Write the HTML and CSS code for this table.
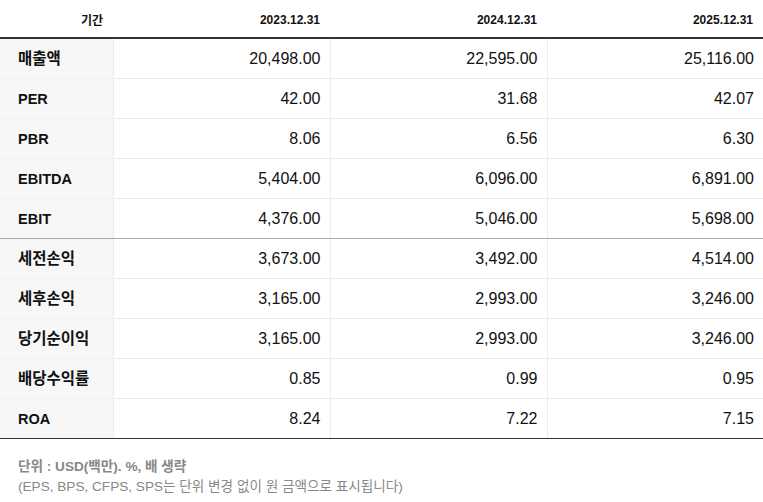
FILE: index.html
```html
<!DOCTYPE html>
<html lang="ko">
<head>
<meta charset="utf-8">
<link rel="stylesheet" href="styles.css">
</head>
<body>
<table class="fin">
  <colgroup>
    <col class="c-label">
    <col class="c-val">
    <col class="c-val">
    <col>
  </colgroup>
  <thead>
    <tr>
      <th>기간</th>
      <th>2023.12.31</th>
      <th>2024.12.31</th>
      <th>2025.12.31</th>
    </tr>
  </thead>
  <tbody>
    <tr><th class="ko">매출액</th><td>20,498.00</td><td>22,595.00</td><td>25,116.00</td></tr>
    <tr><th>PER</th><td>42.00</td><td>31.68</td><td>42.07</td></tr>
    <tr><th>PBR</th><td>8.06</td><td>6.56</td><td>6.30</td></tr>
    <tr><th>EBITDA</th><td>5,404.00</td><td>6,096.00</td><td>6,891.00</td></tr>
    <tr class="sep"><th>EBIT</th><td>4,376.00</td><td>5,046.00</td><td>5,698.00</td></tr>
    <tr><th class="ko">세전손익</th><td>3,673.00</td><td>3,492.00</td><td>4,514.00</td></tr>
    <tr><th class="ko">세후손익</th><td>3,165.00</td><td>2,993.00</td><td>3,246.00</td></tr>
    <tr><th class="ko">당기순이익</th><td>3,165.00</td><td>2,993.00</td><td>3,246.00</td></tr>
    <tr><th class="ko">배당수익률</th><td>0.85</td><td>0.99</td><td>0.95</td></tr>
    <tr class="last"><th>ROA</th><td>8.24</td><td>7.22</td><td>7.15</td></tr>
  </tbody>
</table>
<div class="note">
  <p class="note-main">단위 : USD(백만). %, 배 생략</p>
  <p class="note-sub">(EPS, BPS, CFPS, SPS는 단위 변경 없이 원 금액으로 표시됩니다)</p>
</div>
</body>
</html>
```
FILE: styles.css
```css
html, body {
  margin: 0;
  padding: 0;
  background: #fff;
}
body {
  font-family: "Liberation Sans", Arial, "Noto Sans CJK KR", sans-serif;
  color: #111;
}
.fin {
  width: 763px;
  border-collapse: collapse;
  table-layout: fixed;
}
.c-label { width: 113px; }
.c-val { width: 217px; }

.fin thead th {
  height: 38px;
  padding: 2px 10px 0 0;
  box-sizing: border-box;
  text-align: right;
  font-size: 12px;
  font-weight: bold;
  color: #111;
  border-bottom: 2px solid #333;
}
.fin tbody th,
.fin tbody td {
  height: 39px;
  padding: 0;
  line-height: 18px;
  border-bottom: 1px solid #ebebeb;
}
.fin tbody th {
  background: #f7f7f7;
  text-align: left;
  padding-left: 18px;
  font-size: 14.5px;
  font-weight: bold;
  border-bottom-color: #f1f1f1;
  border-right: 1px solid #ebebeb;
}
.fin tbody th.ko {
  font-size: 15.5px;
}
.fin tbody td {
  text-align: right;
  padding-right: 9px;
  font-size: 16px;
  border-left: 1px solid #ebebeb;
}
.fin tbody tr.sep th,
.fin tbody tr.sep td {
  border-bottom: 1px solid #aaa;
}
.fin tbody tr.last th,
.fin tbody tr.last td {
  border-bottom: 1px solid #333;
}
.note {
  padding: 18px 0 0 18px;
  color: #888;
  font-size: 13.6px;
  line-height: 20px;
}
.note p {
  margin: 0;
}
.note-main {
  font-weight: bold;
}
```
